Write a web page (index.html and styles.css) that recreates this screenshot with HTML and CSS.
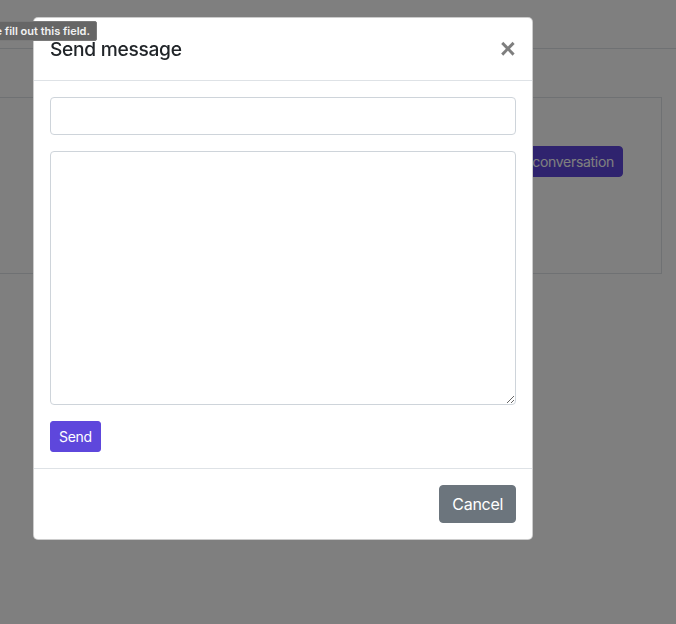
FILE: index.html
```html
<!DOCTYPE html>
<html>
<head>
<meta charset="utf-8">
<link rel="stylesheet" href="styles.css">
</head>
<body>
<div class="page">
  <nav class="navbar"></nav>
  <div class="content">
    <div class="card">
      <button class="btn btn-primary start">Start conversation</button>
    </div>
  </div>
</div>
<div class="backdrop"></div>
<div class="modal">
  <div class="modal-header">
    <h5 class="modal-title">Send message</h5>
    <button class="close" type="button">×</button>
  </div>
  <div class="modal-body">
    <input class="form-control" type="text">
    <textarea class="form-control area"></textarea>
    <button class="btn btn-primary btn-sm">Send</button>
  </div>
  <div class="modal-footer">
    <button class="btn btn-secondary">Cancel</button>
  </div>
</div>
<div class="tooltip">Please fill out this field.</div>
</body>
</html>
```
FILE: styles.css
```css
* { box-sizing: border-box; }
html, body { margin: 0; height: 100%; }
body {
  font-family: Inter, "Liberation Sans", sans-serif;
  color: #212529;
  background: #fff;
  overflow: hidden;
}
.navbar {
  height: 49px;
  border-bottom: 1px solid #dee2e6;
}
.content {
  padding: 48px 14px 0 0;
}
.card {
  height: 177px;
  border: 1px solid #dee2e6;
  border-left: none;
  display: flex;
  justify-content: flex-end;
  align-items: flex-start;
  padding: 48px 38px 0 0;
}
.btn {
  font-family: inherit;
  border: 1px solid transparent;
  border-radius: 4px;
  font-size: 16px;
  line-height: 24px;
  padding: 6px 12px;
  color: #fff;
  cursor: pointer;
  letter-spacing: -0.3px;
}
.btn-primary { background: #5e47dc; border-color: #5e47dc; }
.btn-secondary { background: #6c757d; border-color: #6c757d; }
.btn-sm { font-size: 14px; line-height: 21px; padding: 4px 8px; border-radius: 3px; }
.start { font-size: 14px; line-height: 21px; padding: 4px 8px; }
.backdrop {
  position: fixed;
  inset: 0;
  background: rgba(0,0,0,0.5);
}
.modal {
  position: fixed;
  left: 33px;
  top: 17px;
  width: 500px;
  background: #fff;
  border: 1px solid rgba(0,0,0,0.2);
  border-radius: 5px;
  display: flex;
  flex-direction: column;
}
.modal-header {
  display: flex;
  justify-content: space-between;
  align-items: flex-start;
  padding: 16px;
  border-bottom: 1px solid #dee2e6;
}
.modal-title {
  margin: 0;
  font-size: 19.2px;
  letter-spacing: -0.3px;
  line-height: 30px;
  font-weight: 500;
}
.close {
  background: none;
  border: 0;
  padding: 0;
  margin: 0 -1px 0 0;
  font-family: "Liberation Sans", sans-serif;
  font-size: 27px;
  font-weight: 700;
  line-height: 30px;
  color: #000;
  opacity: 0.5;
  width: 18px;
}
.modal-body {
  padding: 16px;
  display: flex;
  flex-direction: column;
  align-items: flex-start;
  gap: 16px;
}
.form-control {
  display: block;
  width: 100%;
  height: 38px;
  border: 1px solid #ced4da;
  border-radius: 4px;
  padding: 6px 12px;
  font-size: 16px;
  font-family: inherit;
  margin: 0;
}
.area { height: 254px; resize: vertical; }
.modal-footer {
  display: flex;
  justify-content: flex-end;
  padding: 12px;
  border-top: 1px solid #dee2e6;
}
.modal-footer .btn { margin: 4px; }
.tooltip {
  position: fixed;
  right: 579px;
  top: 21px;
  height: 20px;
  padding: 0 6px;
  background: #666;
  border: 1px solid #7a7a7a;
  color: #f2f2f2;
  font-family: Inter, "Liberation Sans", sans-serif;
  font-size: 11px;
  font-weight: 600;
  line-height: 18px;
  white-space: nowrap;
  border-radius: 2px;
}
```
